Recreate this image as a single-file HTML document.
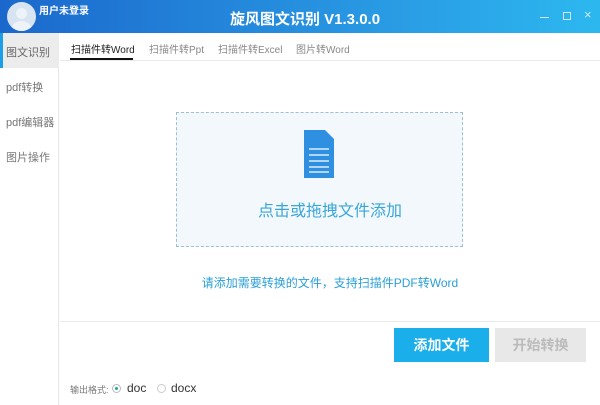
<!DOCTYPE html>
<html><head><meta charset="utf-8"><style>
*{margin:0;padding:0;box-sizing:border-box}
body{width:600px;height:405px;overflow:hidden;background:#fff;font-family:"Liberation Sans","Noto Sans CJK SC",sans-serif;position:relative}
.abs{position:absolute}
</style></head><body>
<div class="abs" style="left:0;top:0;width:600px;height:33px;background:linear-gradient(90deg,#1b68cc,#2a9fe6 70%,#2cb8ef)"></div>
<div class="abs" style="left:7px;top:2px;width:29px;height:29px;border-radius:50%;background:#d8e4f2;overflow:hidden">
<div class="abs" style="left:9px;top:6px;width:11px;height:11px;border-radius:50%;background:#eef3f9"></div>
<div class="abs" style="left:4px;top:19px;width:21px;height:14px;border-radius:10px 10px 0 0;background:#eef3f9"></div></div>
<div class="abs" style="left:39px;top:2px;color:#fff;font-size:10px;font-weight:bold">用户未登录</div>
<div class="abs" style="left:230px;top:8px;color:#fff;font-size:15px;font-weight:bold">旋风图文识别 V1.3.0.0</div>
<div class="abs" style="left:540px;top:17px;width:9px;height:1px;background:#cfe9fa"></div>
<div class="abs" style="left:563px;top:12px;width:8px;height:8px;border:1px solid #cfe9fa"></div>
<div class="abs" style="left:584px;top:7px;color:#cfe9fa;font-size:13px">×</div>

<div class="abs" style="left:0;top:33px;width:59px;height:372px;background:#fff;border-right:1px solid #e6e6e6"></div>
<div class="abs" style="left:0;top:33px;width:59px;height:35px;background:#ececec;border-left:3px solid #1a9fe8"></div>
<div class="abs" style="left:6px;top:44px;font-size:11px;color:#666">图文识别</div>
<div class="abs" style="left:6px;top:79px;font-size:11px;color:#777">pdf转换</div>
<div class="abs" style="left:6px;top:114px;font-size:11px;color:#777">pdf编辑器</div>
<div class="abs" style="left:6px;top:149px;font-size:11px;color:#777">图片操作</div>

<div class="abs" style="left:60px;top:60px;width:540px;height:1px;background:#eaeaea"></div>
<div class="abs" style="left:71px;top:41px;font-size:10px;color:#222">扫描件转Word</div>
<div class="abs" style="left:70px;top:58px;width:63px;height:2px;background:#111"></div>
<div class="abs" style="left:149px;top:41px;font-size:10px;color:#888">扫描件转Ppt</div>
<div class="abs" style="left:218px;top:41px;font-size:10px;color:#888">扫描件转Excel</div>
<div class="abs" style="left:296px;top:41px;font-size:10px;color:#888">图片转Word</div>

<div class="abs" style="left:176px;top:112px;width:287px;height:135px;background:#f2f8fc;border:1px dashed #9fbfcf"></div>
<svg class="abs" style="left:303px;top:129px" width="32" height="50" viewBox="0 0 32 50"><path d="M1 1H22L31 10V49H1Z" fill="#2f8fe0"/><g stroke="#fff" stroke-width="1.2"><path d="M6 20H26M6 26H26M6 32H26M6 38H26M6 43H26"/></g></svg>
<div class="abs" style="left:230px;top:197px;width:200px;text-align:center;font-size:16px;color:#3aa6d8">点击或拖拽文件添加</div>
<div class="abs" style="left:180px;top:274px;width:300px;text-align:center;font-size:12px;color:#2aa0d8">请添加需要转换的文件，支持扫描件PDF转Word</div>

<div class="abs" style="left:60px;top:321px;width:540px;height:1px;background:#eaeaea"></div>
<div class="abs" style="left:394px;top:328px;width:95px;height:34px;background:#1aaeea;color:#fff;font-size:14px;text-align:center;line-height:34px;font-weight:bold">添加文件</div>
<div class="abs" style="left:495px;top:328px;width:91px;height:34px;background:#e8e8e8;color:#bbb;font-size:14px;text-align:center;line-height:34px;font-weight:bold">开始转换</div>
<div class="abs" style="left:70px;top:383px;font-size:9px;color:#777">输出格式:</div>
<div class="abs" style="left:112px;top:384px;width:9px;height:9px;border-radius:50%;border:1px solid #bbb"><div style="margin:2px;width:3px;height:3px;border-radius:50%;background:#1aa89a"></div></div>
<div class="abs" style="left:127px;top:381px;font-size:12px;color:#333">doc</div>
<div class="abs" style="left:157px;top:384px;width:9px;height:9px;border-radius:50%;border:1px solid #ccc"></div>
<div class="abs" style="left:171px;top:381px;font-size:12px;color:#333">docx</div>
</body></html>
